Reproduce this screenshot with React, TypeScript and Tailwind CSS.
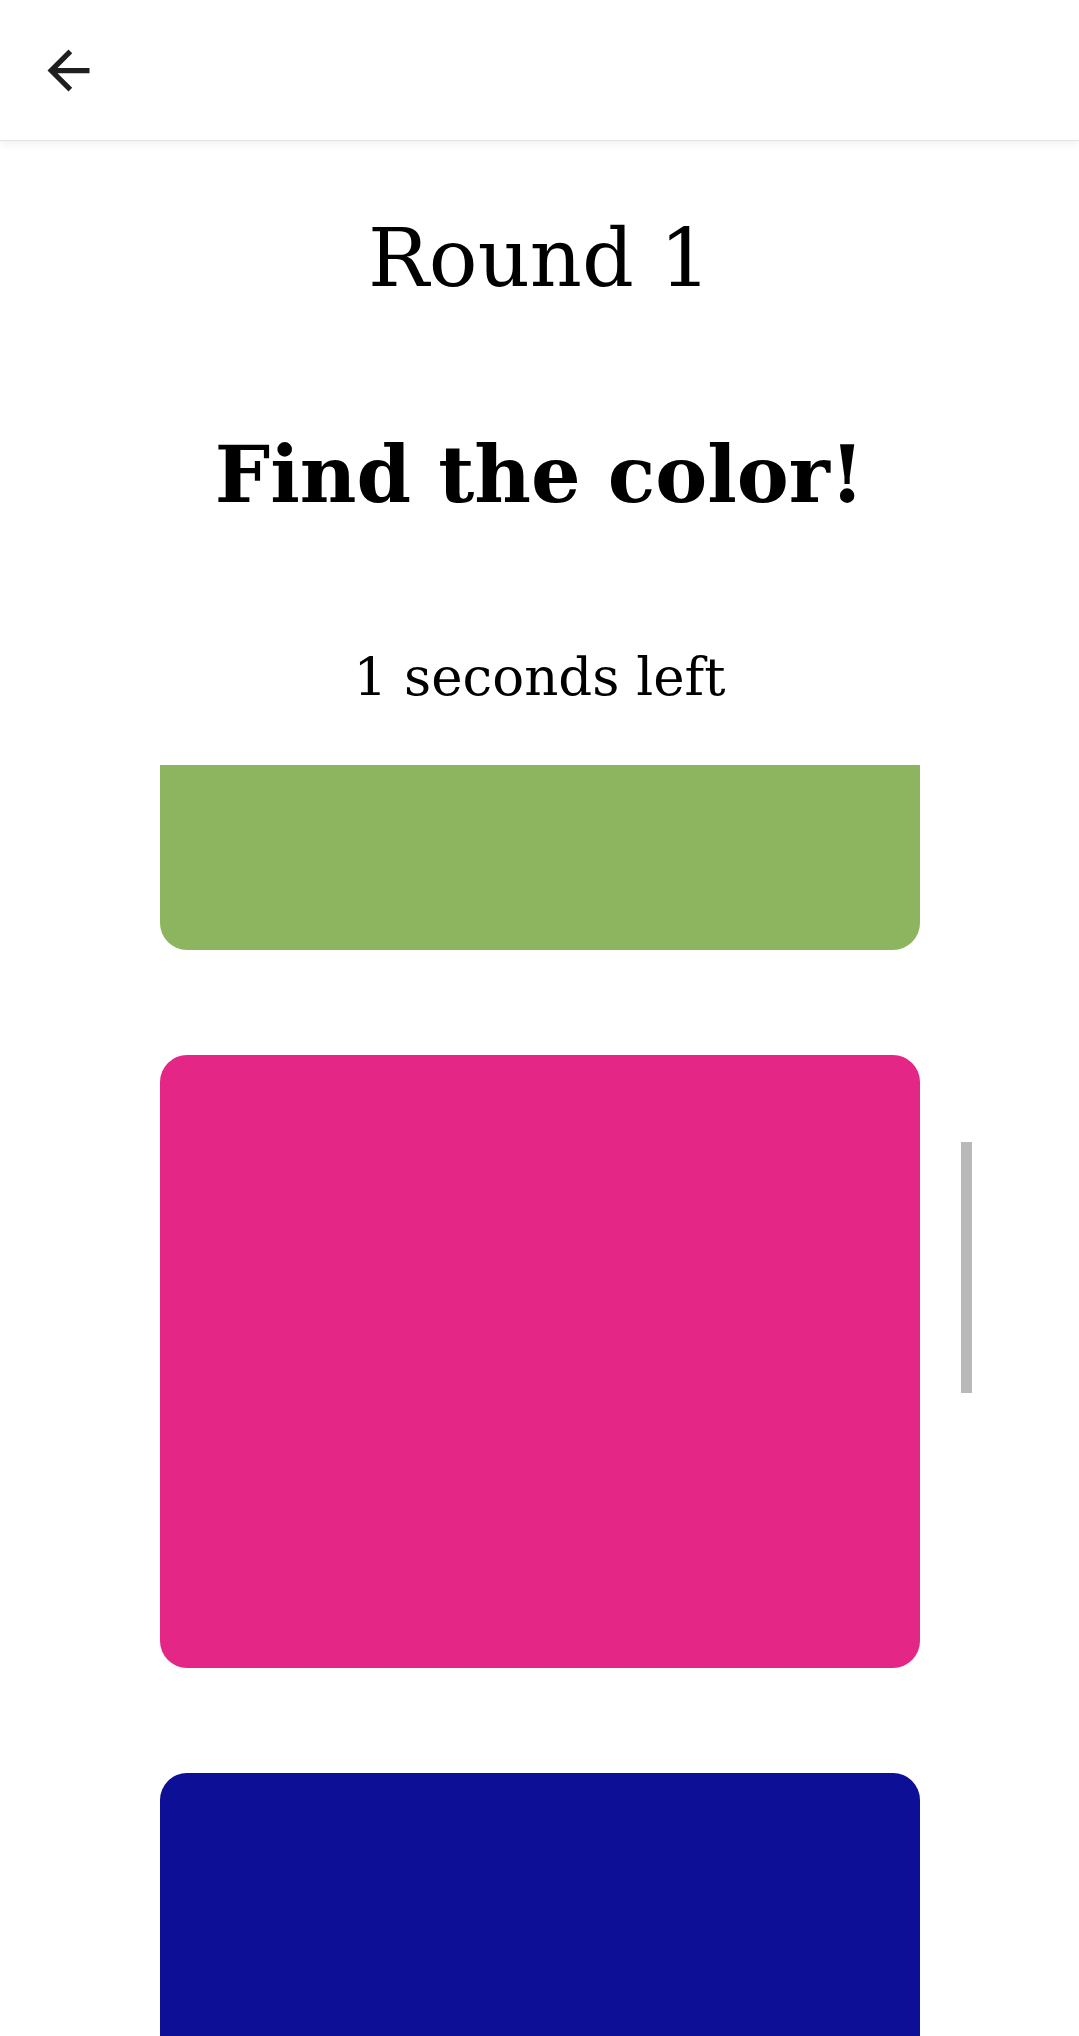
import React from "react";

const colors = ["#8db55f", "#e42687", "#0d0f96", "#f0a030"];

export default function App() {
  return (
    <div className="w-[1079px] h-[2036px] bg-white overflow-hidden flex flex-col relative" style={{ fontFamily: '"DejaVu Serif", serif' }}>
      <header className="h-[141px] shrink-0 bg-white flex items-center relative z-10 border-b border-[#e4e4e4] shadow-[0_3px_8px_rgba(0,0,0,0.06)]">
        <button className="ml-[37px] w-[63px] h-[63px] flex items-center justify-center">
          <svg viewBox="0 0 24 24" width="63" height="63" fill="#1f1f1f">
            <path d="M20 11H7.83l5.59-5.59L12 4l-8 8 8 8 1.41-1.41L7.83 13H20v-2z" />
          </svg>
        </button>
      </header>
      <div className="flex flex-col items-center text-black">
        <h1 className="mt-[67px] text-[81px] leading-[100px] font-normal">Round 1</h1>
        <h2 className="mt-[122px] text-[78px] leading-[90px] font-bold">Find the color!</h2>
        <p className="mt-[125px] text-[53px] leading-[64px]">1 seconds left</p>
      </div>
      <div className="relative flex-1 mt-[56px] overflow-hidden">
        <div className="flex flex-col items-center gap-[105px] -mt-[428px]">
          {colors.map((c) => (
            <div key={c} className="w-[760px] h-[613px] shrink-0 rounded-[27px]" style={{ backgroundColor: c }} />
          ))}
        </div>
        <div className="absolute left-[961px] top-[377px] w-[11px] h-[251px] bg-[#b9b9b9]" />
      </div>
    </div>
  );
}
